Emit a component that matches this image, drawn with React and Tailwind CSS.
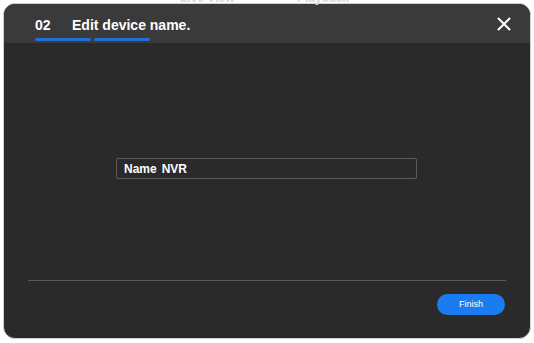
export default function App() {
  return (
    <div className="relative w-[534px] h-[343px] bg-white overflow-hidden p-[3px]" style={{ fontFamily: '"Liberation Sans", Arial, sans-serif' }}>
      <div className="w-[528px] h-[336px] rounded-[12px] bg-[#2a2a2a] border border-[#d0d0d0] overflow-hidden flex flex-col">
        <div className="h-[39px] bg-[#3a3a3a] flex items-start px-[31px] shrink-0">
          <div className="flex flex-col pt-[13px]">
            <div className="flex items-center text-white font-bold text-[14px] leading-[17px]">
              <span className="w-[37px]">02</span>
              <span>Edit device name.</span>
            </div>
            <div className="flex gap-[3px] mt-[4px]">
              <div className="w-[56px] h-[3px] bg-[#1f6fd6] rounded-full" />
              <div className="w-[56px] h-[3px] bg-[#1f6fd6] rounded-full" />
            </div>
          </div>
          <div className="ml-auto mt-[13px] mr-[-12px]">
            <svg width="14" height="14" viewBox="0 0 14 14">
              <path d="M1.5 1.5 L12.5 12.5 M12.5 1.5 L1.5 12.5" stroke="white" strokeWidth="2" strokeLinecap="round" />
            </svg>
          </div>
        </div>
        <div className="flex-1 flex flex-col">
          <div className="h-[237px] flex items-center justify-start pl-[112px] pt-[14px]">
            <div className="w-[301px] h-[21px] border border-[#5c5c5c] rounded-[2px] flex items-center pl-[7px] text-white font-bold text-[12px]">
              <span>Name</span>
              <span className="ml-[5px]">NVR</span>
            </div>
          </div>
          <div className="mx-[24px] h-px bg-[#5a5a5a]" />
          <div className="flex justify-end pr-[25px] pt-[13px]">
            <div className="w-[68px] h-[21px] rounded-full bg-[#1a7cf0] text-white text-[9px] flex items-center justify-center">Finish</div>
          </div>
        </div>
      </div>
      <div className="absolute top-[-8px] left-[180px] text-[#d8d8d8] text-[12px] font-bold leading-[12px]">Live View</div>
      <div className="absolute top-[-8px] left-[297px] text-[#d8d8d8] text-[12px] font-bold leading-[12px]">Playback</div>
    </div>
  );
}
